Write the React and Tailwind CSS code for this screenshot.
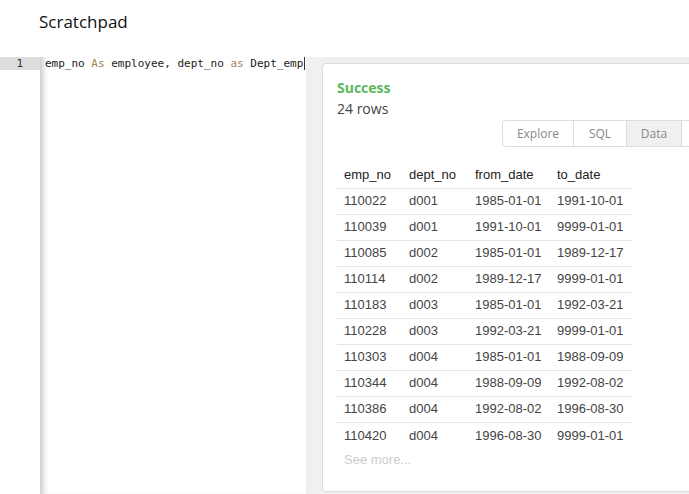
import React from 'react';

const rows = [
  ['110022', 'd001', '1985-01-01', '1991-10-01'],
  ['110039', 'd001', '1991-10-01', '9999-01-01'],
  ['110085', 'd002', '1985-01-01', '1989-12-17'],
  ['110114', 'd002', '1989-12-17', '9999-01-01'],
  ['110183', 'd003', '1985-01-01', '1992-03-21'],
  ['110228', 'd003', '1992-03-21', '9999-01-01'],
  ['110303', 'd004', '1985-01-01', '1988-09-09'],
  ['110344', 'd004', '1988-09-09', '1992-08-02'],
  ['110386', 'd004', '1992-08-02', '1996-08-30'],
  ['110420', 'd004', '1996-08-30', '9999-01-01'],
];

const cols = ['emp_no', 'dept_no', 'from_date', 'to_date'];
const widths = ['w-[65px]', 'w-[66px]', 'w-[82px]', 'w-[82px]'];

const Editor = () => (
  <div className="flex w-[306px] shrink-0 bg-white">
    {/* gutter */}
    <div className="w-[40px] shrink-0">
      <div className="h-[13px] bg-[#dddddd] pr-[17px] text-right font-['DejaVu_Sans_Mono',monospace] text-[11px] leading-[13px] text-[#333]">
        1
      </div>
    </div>
    {/* code */}
    <div className="flex-1 shadow-[inset_8px_0_6px_-5px_rgba(0,0,0,0.22)] pl-[5px]">
      <div className="flex h-[13px] items-center font-['DejaVu_Sans_Mono',monospace] text-[11px] leading-[13px] text-[#222] whitespace-pre">
        <span>emp_no </span>
        <span className="text-[#a67f59]">As</span>
        <span> employee, dept_no </span>
        <span className="text-[#a67f59]">as</span>
        <span> Dept_emp</span>
        <span className="ml-px h-[13px] w-px bg-[#333]" />
      </div>
    </div>
  </div>
);

const Results = () => (
  <div className="flex-1 bg-[#f0f0f0] pl-[16px] pt-[6px]">
    <div className="h-[429px] w-[430px] rounded-[4px] border border-[#dddddd] bg-white px-[14px] pt-[16px]">
      <div className="font-['Open_Sans',sans-serif] text-[14px] font-bold leading-[16px] text-[#5cb85c]">Success</div>
      <div className="mt-[5px] font-['Open_Sans',sans-serif] text-[14px] leading-[16px] text-[#444]">24 rows</div>
      <div className="mt-[3px] flex justify-end">
        <div className="flex h-[27px] overflow-hidden rounded-[4px] border border-[#dddddd] font-['Open_Sans',sans-serif] text-[12px] text-[#888]">
          <div className="flex w-[71px] items-center justify-center border-r border-[#dddddd]">Explore</div>
          <div className="flex w-[53px] items-center justify-center border-r border-[#dddddd]">SQL</div>
          <div className="flex w-[55px] items-center justify-center border-r border-[#dddddd] bg-[#f0f0f0]">Data</div>
          <div className="w-[54px]" />
        </div>
      </div>
      <table className="mt-[15px] border-collapse font-['Liberation_Sans',Arial,sans-serif] text-[13px] text-[#444]">
        <thead>
          <tr className="h-[26px] border-b border-[#e6e6e6]">
            {cols.map((c, i) => (
              <th key={c} className={`${widths[i]} px-[7px] text-left font-normal text-[#222]`}>{c}</th>
            ))}
          </tr>
        </thead>
        <tbody>
          {rows.map((r, ri) => (
            <tr key={r[0]} className={`h-[26px] ${ri < rows.length - 1 ? 'border-b border-[#e6e6e6]' : ''}`}>
              {r.map((v, i) => (
                <td key={i} className={`${widths[i]} px-[7px]`}>{v}</td>
              ))}
            </tr>
          ))}
        </tbody>
      </table>
      <div className="mt-[4px] px-[7px] font-['Liberation_Sans',Arial,sans-serif] text-[13px] leading-[16px] text-[#cccccc]">See more...</div>
    </div>
  </div>
);

export default function App() {
  return (
    <div className="h-[494px] w-[689px] overflow-hidden bg-white">
      <div className="flex h-[57px] items-start pl-[39px] pt-[11px] font-['Open_Sans',sans-serif] text-[17px] leading-[22px] text-[#111]">
        Scratchpad
      </div>
      <div className="flex h-[437px]">
        <Editor />
        <Results />
      </div>
    </div>
  );
}
